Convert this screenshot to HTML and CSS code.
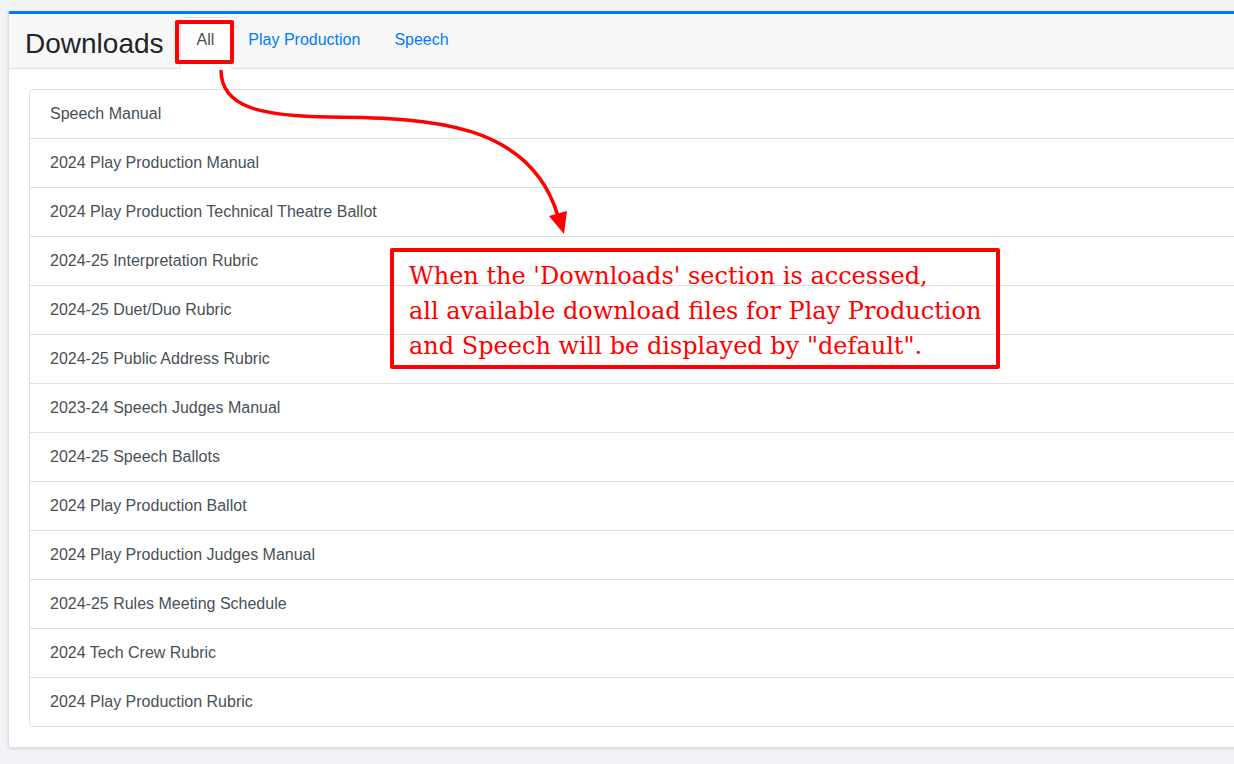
FILE: index.html
```html
<!DOCTYPE html>
<html lang="en">
<head>
    <meta charset="UTF-8">
    <title>Downloads</title>
    <link rel="stylesheet" href="styles.css">
</head>
<body>
    <div class="page">
        <div class="card">
            <div class="card-header">
                <h2>Downloads</h2>
                <ul class="tabs">
                    <li><a class="tab active" href="#">All</a></li>
                    <li><a class="tab" href="#">Play Production</a></li>
                    <li><a class="tab" href="#">Speech</a></li>
                </ul>
            </div>
            <div class="card-body">
                <ul class="list">
                    <li>Speech Manual</li>
                    <li>2024 Play Production Manual</li>
                    <li>2024 Play Production Technical Theatre Ballot</li>
                    <li>2024-25 Interpretation Rubric</li>
                    <li>2024-25 Duet/Duo Rubric</li>
                    <li>2024-25 Public Address Rubric</li>
                    <li>2023-24 Speech Judges Manual</li>
                    <li>2024-25 Speech Ballots</li>
                    <li>2024 Play Production Ballot</li>
                    <li>2024 Play Production Judges Manual</li>
                    <li>2024-25 Rules Meeting Schedule</li>
                    <li>2024 Tech Crew Rubric</li>
                    <li>2024 Play Production Rubric</li>
                </ul>
            </div>
        </div>
    </div>

    <!-- annotation overlay -->
    <div class="mark-tab"></div>
    <svg class="arrow" width="1234" height="764">
        <path d="M221 70 C221 108 262 116 330 117 C430 118 530 122 558 216" />
        <polygon points="549,216 567,211 564,234" />
    </svg>
    <div class="note">
        When the 'Downloads' section is accessed,<br>
        all available download files for Play Production<br>
        and Speech will be displayed by "default".
    </div>
</body>
</html>
```

FILE: styles.css
```css
* { margin: 0; padding: 0; box-sizing: border-box; }
body {
    font-family: "Liberation Sans", Arial, sans-serif;
    background: #f2f3f7;
    color: #212529;
    overflow: hidden;
    height: 764px;
}
.page {
    padding: 11px 0 0 8px;
}
.card {
    width: 1260px;
    background: #fff;
    border: 1px solid #dcdde0;
    border-top: 3px solid #007bff;
    border-radius: 3px;
    box-shadow: 0 1px 3px rgba(0,0,0,0.12);
}
.card-header {
    display: flex;
    align-items: flex-end;
    height: 55px;
    padding-left: 16px;
    background: #f7f7f7;
    border-bottom: 1px solid #dfdfdf;
}
.card-header h2 {
    font-size: 28px;
    font-weight: 400;
    line-height: 34px;
    margin-bottom: 7px;
    margin-right: 16px;
}
.tabs {
    list-style: none;
    display: flex;
    margin-bottom: -1px;
}
.tab {
    display: block;
    padding: 10px 16px 16px;
    font-size: 16px;
    line-height: 24px;
    color: #007bff;
    text-decoration: none;
    border: 1px solid transparent;
    border-radius: 4px 4px 0 0;
}
.tab.active {
    color: #495057;
    background: #fff;
    border-color: #e6e6e6 #e6e6e6 #fff;
}
.card-body {
    padding: 20px;
}
.list {
    list-style: none;
    border: 1px solid #dfdfdf;
    border-radius: 4px;
}
.list li {
    padding: 12px 20px;
    font-size: 16px;
    line-height: 24px;
    color: #495057;
    border-top: 1px solid #dfdfdf;
}
.list li:first-child {
    border-top: none;
}

/* annotation */
.mark-tab {
    position: absolute;
    left: 175px;
    top: 20px;
    width: 59px;
    height: 44px;
    border: 4px solid #ff0000;
    border-radius: 2px;
}
.arrow {
    position: absolute;
    left: 0;
    top: 0;
}
.arrow path {
    fill: none;
    stroke: #ff0000;
    stroke-width: 3.5;
}
.arrow polygon {
    fill: #ff0000;
}
.note {
    position: absolute;
    left: 390px;
    top: 248px;
    width: 610px;
    height: 121px;
    padding: 7px 0 0 15px;
    border: 4px solid #ff0000;
    border-radius: 2px;
    font-family: "DejaVu Serif", serif;
    font-size: 24px;
    line-height: 35px;
    color: #ff0000;
    white-space: nowrap;
}
```
